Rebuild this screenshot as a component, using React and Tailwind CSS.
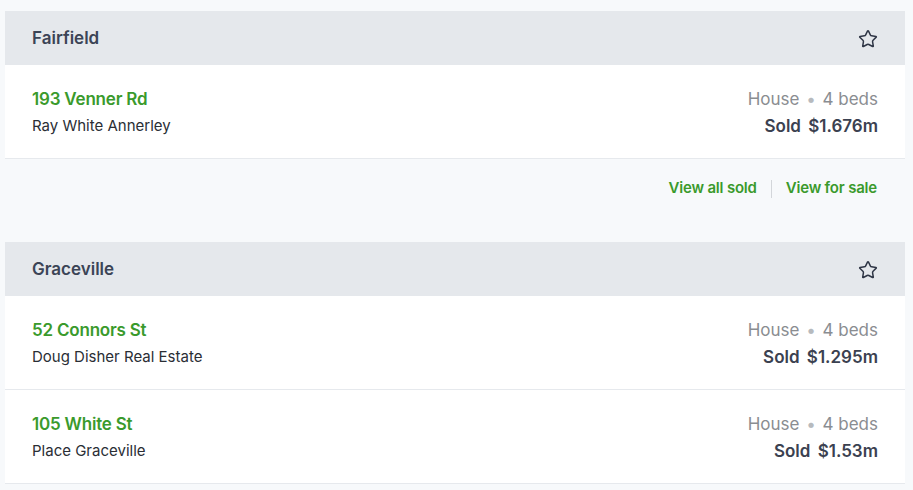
import { Star } from "lucide-react";

const suburbs = [
  {
    name: "Fairfield",
    sales: [
      { address: "193 Venner Rd", agency: "Ray White Annerley", price: "$1.676m" },
    ],
    footer: true,
  },
  {
    name: "Graceville",
    sales: [
      { address: "52 Connors St", agency: "Doug Disher Real Estate", price: "$1.295m" },
      { address: "105 White St", agency: "Place Graceville", price: "$1.53m" },
    ],
  },
];

function SaleRow({ sale }) {
  return (
    <div className="flex items-start justify-between bg-white border-b border-[#e6e9ed] px-[27px] pt-[22px] h-[94px]">
      <div className="flex flex-col">
        <span className="text-[17px] leading-[24px] font-semibold tracking-[-0.2px] text-[#3a9a2c]">{sale.address}</span>
        <span className="text-[15px] leading-[26px] text-[#2a2e35] mt-[2px]">{sale.agency}</span>
      </div>
      <div className="flex flex-col items-end">
        <span className="text-[17px] leading-[24px] text-[#8a8d91]">
          House <span className="text-[#b7babe] px-[2px]">•</span> 4 beds
        </span>
        <span className="text-[17px] leading-[26px] font-semibold text-[#3b4150] mt-[2px]">
          Sold <span className="ml-[3px]">{sale.price}</span>
        </span>
      </div>
    </div>
  );
}

function Suburb({ suburb }) {
  return (
    <section>
      <div className="flex items-center justify-between h-[54px] bg-[#e5e8ec] px-[27px] pt-[2px]">
        <h2 className="text-[17px] font-semibold text-[#3b4456]">{suburb.name}</h2>
        <Star className="w-[20px] h-[20px] text-[#2f3646]" strokeWidth={1.8} />
      </div>
      {suburb.sales.map((s) => (
        <SaleRow key={s.address} sale={s} />
      ))}
      {suburb.footer && (
        <div className="flex justify-end items-center h-[56px] pt-[3px] px-[28px] text-[15px] font-semibold tracking-[-0.2px] text-[#3a9a2c]">
          <span>View all sold</span>
          <span className="w-px h-[18px] bg-[#d3d6da] mx-[14px]" />
          <span>View for sale</span>
        </div>
      )}
    </section>
  );
}

export default function App() {
  return (
    <div className="min-h-[490px] bg-[#f7f9fb] pt-[11px] font-['Inter',sans-serif]">
      <div className="w-[900px] ml-[5px] flex flex-col gap-[27px]">
        {suburbs.map((s) => (
          <Suburb key={s.name} suburb={s} />
        ))}
      </div>
    </div>
  );
}
